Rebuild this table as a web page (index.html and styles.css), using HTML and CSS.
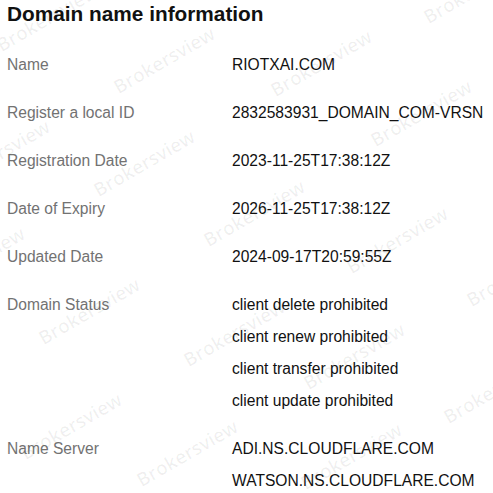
FILE: index.html
```html
<!DOCTYPE html>
<html lang="en">
<head>
    <meta charset="UTF-8">
    <meta name="viewport" content="width=device-width, initial-scale=1.0">
    <title>Domain name information</title>
    <link rel="stylesheet" href="styles.css">
</head>
<body>
    <section class="info">
        <h1>Domain name information</h1>
        <div class="rows">
            <div class="row">
                <div class="label">Name</div>
                <div class="value">RIOTXAI.COM</div>
            </div>
            <div class="row">
                <div class="label">Register a local ID</div>
                <div class="value">2832583931_DOMAIN_COM-VRSN</div>
            </div>
            <div class="row">
                <div class="label">Registration Date</div>
                <div class="value">2023-11-25T17:38:12Z</div>
            </div>
            <div class="row">
                <div class="label">Date of Expiry</div>
                <div class="value">2026-11-25T17:38:12Z</div>
            </div>
            <div class="row">
                <div class="label">Updated Date</div>
                <div class="value">2024-09-17T20:59:55Z</div>
            </div>
            <div class="row">
                <div class="label">Domain Status</div>
                <div class="value">
                    <div>client delete prohibited</div>
                    <div>client renew prohibited</div>
                    <div>client transfer prohibited</div>
                    <div>client update prohibited</div>
                </div>
            </div>
            <div class="row">
                <div class="label">Name Server</div>
                <div class="value">
                    <div>ADI.NS.CLOUDFLARE.COM</div>
                    <div>WATSON.NS.CLOUDFLARE.COM</div>
                </div>
            </div>
        </div>
    </section>

    <div class="watermarks">
        <span>Brokersview</span>
        <span>Brokersview</span>
        <span>Brokersview</span>
        <span>Brokersview</span>
        <span>Brokersview</span>
        <span>Brokersview</span>
        <span>Brokersview</span>
        <span>Brokersview</span>
        <span>Brokersview</span>
        <span>Brokersview</span>
        <span>Brokersview</span>
        <span>Brokersview</span>
        <span>Brokersview</span>
        <span>Brokersview</span>
        <span>Brokersview</span>
        <span>Brokersview</span>
        <span>Brokersview</span>
        <span>Brokersview</span>
    </div>
</body>
</html>
```

FILE: styles.css
```css
body {
    font-family: 'Liberation Sans', Arial, sans-serif;
    background: #ffffff;
    margin: 0;
    padding: 0 7px;
    color: #111111;
    position: relative;
    height: 493px;
    overflow: hidden;
}

h1 {
    margin: 0 0 13px;
    font-size: 20.8px;
    line-height: 28px;
    font-weight: 700;
    color: #111111;
}

.row {
    display: grid;
    grid-template-columns: 225px 1fr;
    padding: 8px 0;
    font-size: 15.6px;
    line-height: 32px;
}

.label {
    color: #727272;
}

.value {
    color: #111111;
}

/* watermark layer */
.watermarks {
    position: absolute;
    inset: 0;
    overflow: hidden;
    pointer-events: none;
}

.watermarks span {
    position: absolute;
    font-family: 'Open Sans', sans-serif;
    font-size: 19px;
    font-weight: 600;
    line-height: 20px;
    color: rgba(0, 0, 0, 0.06);
    transform-origin: 0 100%;
    transform: rotate(-30deg);
    white-space: nowrap;
}

.watermarks span:nth-child(1)  { left: 3px;   top: 35px; }
.watermarks span:nth-child(2)  { left: 120px; top: 77px; }
.watermarks span:nth-child(3)  { left: 277px; top: 80px; }
.watermarks span:nth-child(4)  { left: 430px; top: 7px; }
.watermarks span:nth-child(5)  { left: -45px; top: 170px; }
.watermarks span:nth-child(6)  { left: 100px; top: 180px; }
.watermarks span:nth-child(7)  { left: 377px; top: 130px; }
.watermarks span:nth-child(8)  { left: 210px; top: 230px; }
.watermarks span:nth-child(9)  { left: 353px; top: 257px; }
.watermarks span:nth-child(10) { left: -70px; top: 277px; }
.watermarks span:nth-child(11) { left: 45px;  top: 328px; }
.watermarks span:nth-child(12) { left: 190px; top: 350px; }
.watermarks span:nth-child(13) { left: 310px; top: 373px; }
.watermarks span:nth-child(14) { left: 473px; top: 290px; }
.watermarks span:nth-child(15) { left: 27px;  top: 443px; }
.watermarks span:nth-child(16) { left: 143px; top: 470px; }
.watermarks span:nth-child(17) { left: 307px; top: 473px; }
.watermarks span:nth-child(18) { left: 450px; top: 407px; }
```
